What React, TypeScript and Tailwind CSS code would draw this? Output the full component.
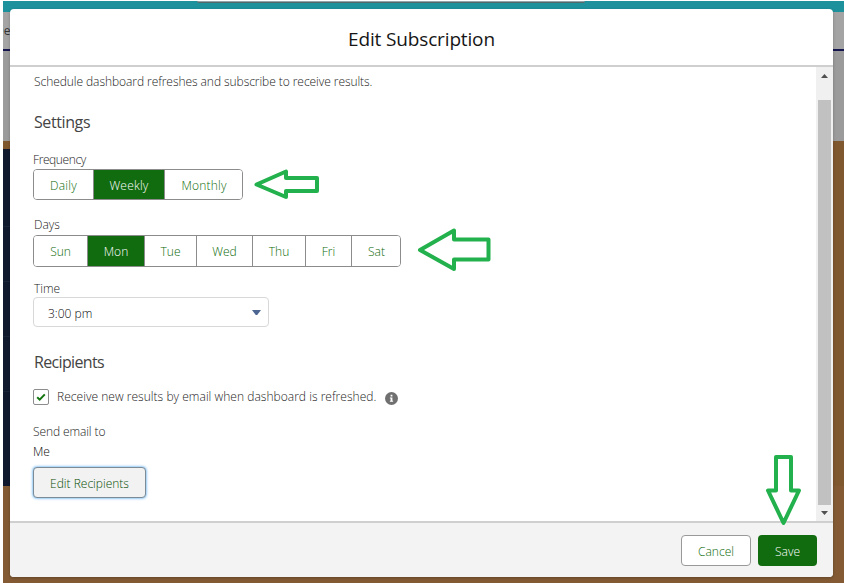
import React from "react";

type Option = { label: string; box: string; text: string };

const frequencies: Option[] = [
  { label: "Daily", box: "w-[60px]", text: "tracking-[0.2px] pl-px" },
  { label: "Weekly", box: "w-[71px]", text: "tracking-[0.2px]" },
  { label: "Monthly", box: "w-[79px]", text: "tracking-[0.2px]" },
];

const days: Option[] = [
  { label: "Sun", box: "w-[54px]", text: "pl-px" },
  { label: "Mon", box: "w-[57px]", text: "" },
  { label: "Tue", box: "w-[52px]", text: "" },
  { label: "Wed", box: "w-[56px]", text: "" },
  { label: "Thu", box: "w-[53px]", text: "" },
  { label: "Fri", box: "w-[46px]", text: "" },
  { label: "Sat", box: "w-[50px]", text: "" },
];

function ButtonGroup({
  options,
  selected,
  height,
  inset,
}: {
  options: Option[];
  selected: string;
  height: string;
  inset: string;
}) {
  return (
    <div className={`flex w-fit overflow-hidden rounded-[4px] border border-[#8c8c8c] ${height}`}>
      {options.map((o, i) => (
        <button
          key={o.label}
          className={`flex items-center justify-center text-[12px] ${inset} ${o.box} ${o.text} ${
            i > 0 ? "border-l border-[#8c8c8c]" : "-ml-px"
          } ${i === options.length - 1 ? "-mr-px" : ""} ${
            o.label === selected ? "bg-[#116b0f] text-white" : "bg-white text-[#0c6a08]"
          }`}
        >
          {o.label}
        </button>
      ))}
    </div>
  );
}

function Arrow({ box, view, points }: { box: string; view: string; points: string }) {
  return (
    <svg className={`pointer-events-none absolute ${box}`} viewBox={view} fill="none">
      <polygon points={points} stroke="#22b14c" strokeWidth="4" strokeLinejoin="round" />
    </svg>
  );
}

function Backdrop() {
  return (
    <div className="absolute inset-0 flex flex-col pt-px pl-[3px]">
      <div className="h-[11px] bg-[#1d929c]">
        <div className="ml-[194px] h-[2px] w-[388px] rounded-b-[3px] border-b border-[#52686a] bg-[#8fa5a7]" />
      </div>
      <div className="flex h-[37px] items-center overflow-hidden bg-[#a4a4a4] text-[12px] font-normal text-[#333]">
        <span className="-ml-[8px]">De</span>
      </div>
      <div className="h-[2px] bg-[#16164f]" />
      <div className="h-[90px] bg-[#9b9b9b]" />
      <div className="h-[8px] bg-[#80582f]" />
      <div className="flex h-[337px] bg-[#80582f]">
        <div className="flex w-[30px] flex-col bg-[#10192e] pt-[77px]">
          <div className="h-px bg-[#1a2539]" />
          <div className="mt-[54px] h-px bg-[#1a2539]" />
          <div className="mt-[54px] h-px bg-[#1a2539]" />
          <div className="mt-[54px] h-px bg-[#1a2539]" />
        </div>
      </div>
      <div className="flex-1 bg-[#835a34]" />
    </div>
  );
}

export default function App() {
  return (
    <div className="relative h-[583px] w-[844px] overflow-hidden bg-white font-['Open_Sans','Noto_Sans',sans-serif] font-light">
      <Backdrop />
      <div className="relative ml-[10px] pt-[9px]">
        <div className="flex h-[568px] w-[823px] flex-col overflow-hidden rounded-[4px] bg-white shadow-[0_1px_3px_rgba(0,0,0,0.25)]">
          <header className="flex h-[58px] shrink-0 items-center justify-center border-b-2 border-[#cfcfcf] pt-[4px] text-[19px] font-normal text-[#161616]">
            <h1 className="tracking-[-0.15px]">Edit Subscription</h1>
          </header>

          <div className="flex h-[454px] shrink-0">
            <main className="flex flex-1 flex-col items-start pl-[23px] text-[12px] text-[#222]">
              <p className="flex h-[30px] items-center pl-px tracking-[-0.06px] whitespace-nowrap">
                Schedule dashboard refreshes and subscribe to receive results.
              </p>
              <h2 className="flex h-[50px] items-center pb-px pl-px text-[16px] font-normal tracking-[-0.4px] text-[#444]">
                Settings
              </h2>
              <div className="flex h-[22px] items-center pt-[3px] tracking-[-0.4px]">Frequency</div>
              <ButtonGroup options={frequencies} selected="Weekly" height="h-[31px]" inset="pt-[3px]" />
              <div className="mt-[15px] flex h-[20px] items-center pl-px">Days</div>
              <ButtonGroup options={days} selected="Mon" height="h-[32px]" inset="pt-px" />
              <div className="mt-[14px] flex h-[16px] items-center pl-px">Time</div>
              <div className="flex h-[30px] w-[236px] items-center justify-between rounded-[4px] border border-[#d8d8d8] pr-[7px] pl-[14px] text-[#080808]">
                <span className="pt-[3px]">3:00 pm</span>
                <svg className="h-[5px] w-[9px]" viewBox="0 0 9 5">
                  <path d="M0 0H9L5.2 5H3.8Z" fill="#4c6691" />
                </svg>
              </div>
              <h2 className="mt-[20px] flex h-[30px] items-center pl-px text-[16px] font-normal tracking-[-0.65px] text-[#444]">
                Recipients
              </h2>
              <label className="mt-[10px] flex h-[20px] items-center">
                <span className="flex size-[16px] items-center justify-center rounded-[2px] border border-[#8c8c8c] bg-white">
                  <svg className="size-[10px]" viewBox="0 0 10 10" fill="none">
                    <path d="M1.2 5.3L3.7 7.7L8.8 2.4" stroke="#14750f" strokeWidth="2" />
                  </svg>
                </span>
                <span className="ml-[8px] w-[320px] tracking-[0.03px] whitespace-nowrap">
                  Receive new results by email when dashboard is refreshed.
                </span>
                <svg className="mt-[2px] ml-[8px] size-[13px]" viewBox="0 0 13 13">
                  <circle cx="6.5" cy="6.5" r="6.5" fill="#707070" />
                  <path d="M5.6 2.8H7.4V4.4H5.6ZM4.9 5.4H7.4V8.7H8.1V9.8H4.9V8.7H5.6V6.4H4.9Z" fill="#fff" />
                </svg>
              </label>
              <div className="mt-[14px] flex h-[20px] items-center pt-[2px] tracking-[-0.1px]">Send email to</div>
              <div className="flex h-[20px] items-center pt-[2px] text-[#080808]">Me</div>
              <button className="mt-[6px] flex h-[31px] w-[113px] items-center justify-center rounded-[4px] border border-[#7d8b96] bg-[#f2f2f2] pt-[3px] text-[12px] text-[#074d04] shadow-[0_0_3px_#2a94ea]">
                Edit Recipients
              </button>
            </main>

            <div className="flex w-[17px] flex-col items-start bg-[#f0f0f0] pl-[2px]">
              <div className="flex h-[33px] w-[13px] justify-center pt-[7px]">
                <svg className="h-[4px] w-[7px]" viewBox="0 0 7 4">
                  <path d="M0 4L3.5 0L7 4Z" fill="#505050" />
                </svg>
              </div>
              <div className="h-[405px] w-[13px] bg-[#c1c1c1]" />
              <div className="flex w-[13px] justify-center pt-[6px]">
                <svg className="h-[4px] w-[7px]" viewBox="0 0 7 4">
                  <path d="M0 0L3.5 4L7 0Z" fill="#505050" />
                </svg>
              </div>
            </div>
          </div>

          <footer className="flex flex-1 items-start justify-end gap-[7px] border-t-2 border-[#cfcfcf] bg-[#f3f3f3] pt-[12px] pr-[16px]">
            <button className="flex h-[31px] w-[70px] items-center justify-center rounded-[4px] border border-[#999] bg-white pt-[3px] text-[12px] text-[#0c6a08]">
              Cancel
            </button>
            <button className="flex h-[31px] w-[59px] items-center justify-center rounded-[4px] bg-[#116b0f] pt-[3px] text-[12px] text-white">
              Save
            </button>
          </footer>
        </div>
      </div>

      <Arrow
        box="left-[250px] top-[165px] h-[40px] w-[75px]"
        view="250 165 75 40"
        points="256.5,184.5 286,171.5 286,178 317,178 317,191 286,191 286,197"
      />
      <Arrow
        box="left-[415px] top-[225px] h-[50px] w-[80px]"
        view="415 225 80 50"
        points="420,250 454,230.5 454,239.5 488.5,239.5 488.5,259.5 454,259.5 454,269"
      />
      <Arrow
        box="left-[760px] top-[450px] h-[80px] w-[46px]"
        view="760 450 46 80"
        points="776,457 791,457 791,490.5 799,490.5 783.5,523 768,490.5 776,490.5"
      />
    </div>
  );
}
